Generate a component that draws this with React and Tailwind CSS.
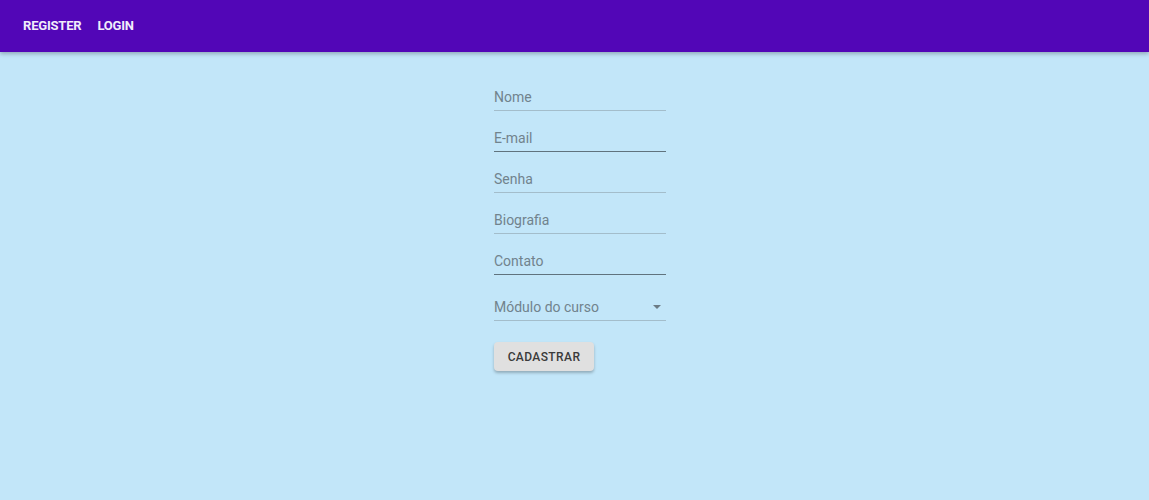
import { useState } from "react";

function Field({ label, active }) {
  return (
    <div
      className={`h-[41px] flex items-end border-b ${
        active ? "border-[#60737e]" : "border-[#a3bdcb]"
      }`}
    >
      <span className="leading-[20px] mb-[3px] text-[14px] text-[#71838d]">{label}</span>
    </div>
  );
}

export default function App() {
  const [fields] = useState([
    { label: "Nome" },
    { label: "E-mail", active: true },
    { label: "Senha" },
    { label: "Biografia" },
    { label: "Contato", active: true },
  ]);

  return (
    <div
      className="w-full h-[500px] bg-[#c2e6f9] flex flex-col overflow-hidden"
      style={{ fontFamily: "Roboto, 'Liberation Sans', sans-serif" }}
    >
      {/* Top bar */}
      <header className="h-[52px] shrink-0 bg-[#5206b7] flex items-center gap-[16px] px-[23px] shadow-[0_2px_4px_rgba(0,0,0,0.25)] relative z-10">
        <span className="text-[#f1ecfb] text-[13px] font-bold tracking-[-0.2px]">REGISTER</span>
        <span className="text-[#f1ecfb] text-[13px] font-bold tracking-[-0.2px]">LOGIN</span>
      </header>

      {/* Form */}
      <main className="flex justify-center pl-[11px] pt-[18px]">
        <form className="w-[172px] flex flex-col">
          {fields.map((f) => (
            <Field key={f.label} label={f.label} active={f.active} />
          ))}
          <div className="h-[46px] flex items-end justify-between border-b border-[#a3bdcb]">
            <span className="leading-[20px] mb-[3px] text-[14px] text-[#71838d]">
              Módulo do curso
            </span>
            <svg width="8" height="4" viewBox="0 0 8 4" className="mb-[11px] mr-[5px]">
              <path d="M0 0 L8 0 L4 4 Z" fill="#6b7b85" />
            </svg>
          </div>
          <button
            type="button"
            className="mt-[21px] w-[100px] h-[29px] rounded-[4px] bg-[#e0e0e0] text-[#3a3a3a] text-[12px] font-medium tracking-[0.4px] shadow-[0_2px_3px_rgba(0,0,0,0.25)]"
          >
            CADASTRAR
          </button>
        </form>
      </main>
    </div>
  );
}
